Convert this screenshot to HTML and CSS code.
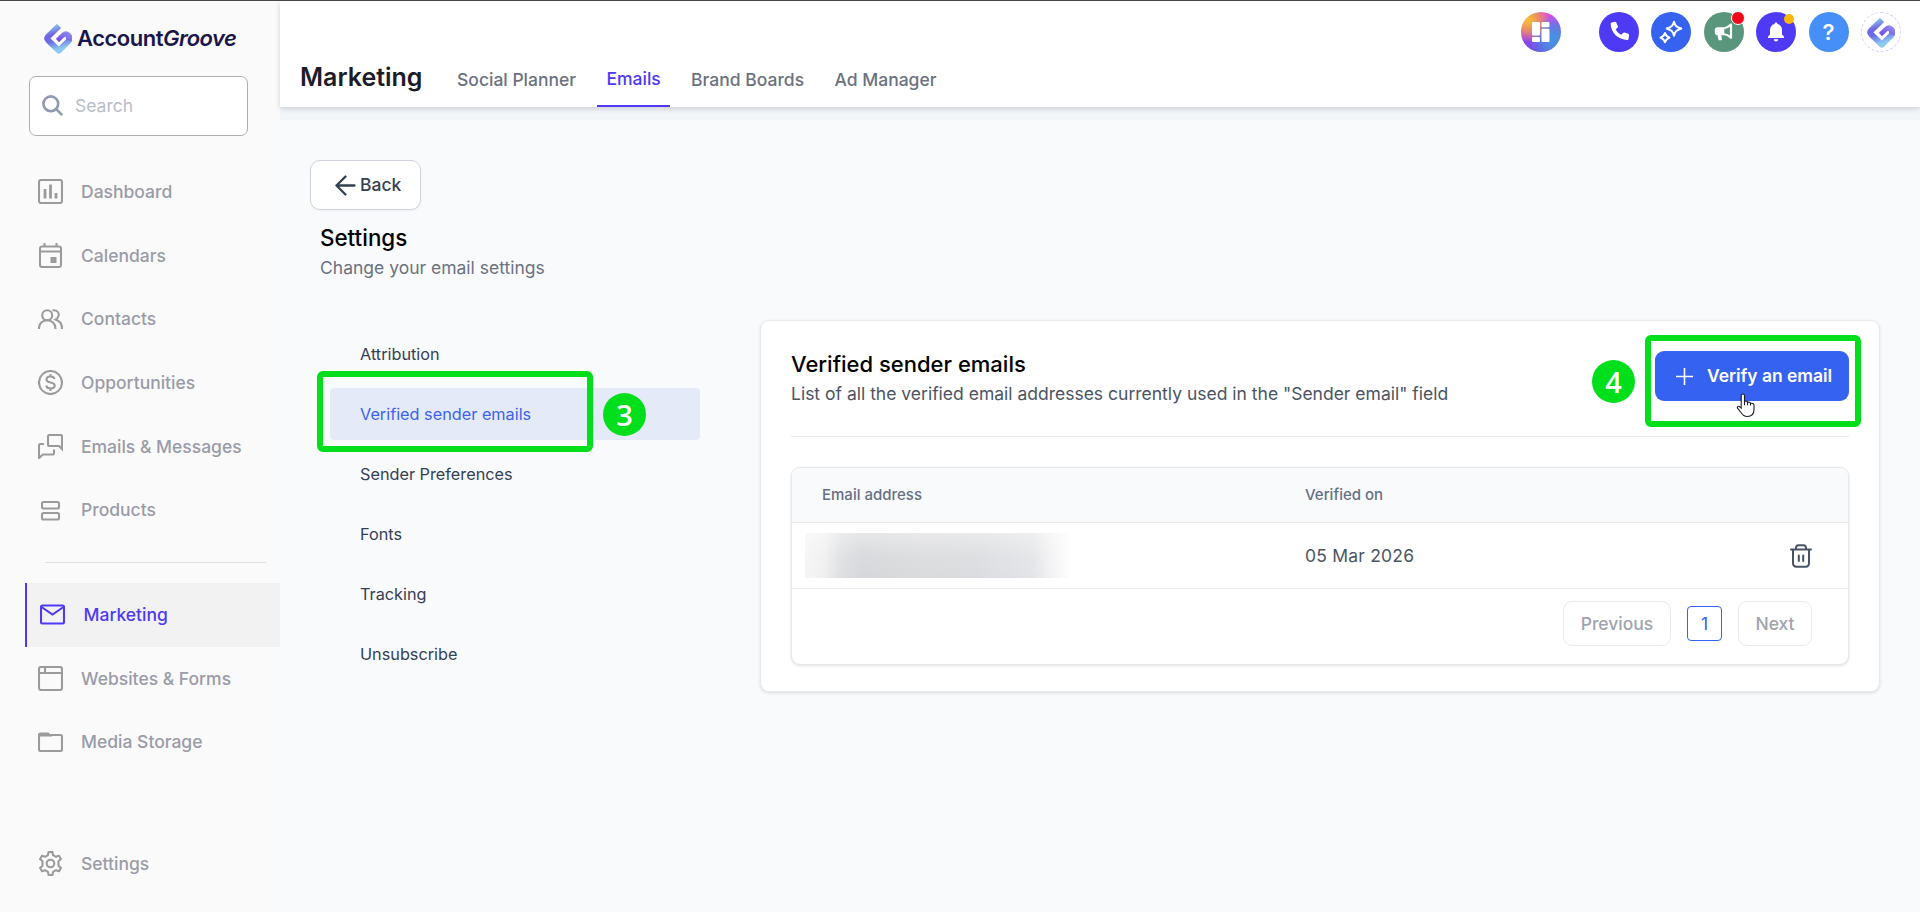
FILE: index.html
```html
<!DOCTYPE html>
<html lang="en">
<head>
<meta charset="utf-8">
<title>AccountGroove</title>
<link rel="stylesheet" href="styles.css">
</head>
<body>
<svg class="defs" width="0" height="0" aria-hidden="true">
  <defs>
    <linearGradient id="lg" x1="0" y1="0" x2="0.25" y2="1">
      <stop offset="0" stop-color="#8fd0ee"/><stop offset=".4" stop-color="#6f63e6"/><stop offset=".65" stop-color="#6c6ee4"/><stop offset="1" stop-color="#8cc8f0"/>
    </linearGradient>
    <linearGradient id="lg2" x1="0" y1="1" x2="1" y2="0">
      <stop offset="0" stop-color="#6f45e2"/><stop offset="1" stop-color="#8b86f0"/>
    </linearGradient>
    <symbol id="logo" viewBox="0 0 28 31">
      <path d="M15 2.800 4.200 13.300q-1.900 2 0 4L14.800 27.600 24.200 18.300q2-2.800-.2-5.600" fill="none" stroke="url(#lg)" stroke-width="6" stroke-linejoin="round"/>
      <path d="M25 17.500q1.600-3.200-.9-5.600-2.300-1.900-4.600.2L12.800 18.700" fill="none" stroke="url(#lg2)" stroke-width="5.200" stroke-linejoin="round"/>
      <path d="M15.500 9.500 9.800 15.200 15 20.800 21.500 14.600" fill="none" stroke="#fff" stroke-width="2.300"/>
    </symbol>
  </defs>
</svg>
<div class="app">
  <aside class="sidebar">
    <div class="brand"><svg width="28" height="31"><use href="#logo"/></svg><span class="brand-name">Account<i>Groove</i></span></div>
    <div class="search"><svg width="22" height="22" viewBox="0 0 22 22" fill="none" stroke="#8f9bb3" stroke-width="2.600"><circle cx="8.800" cy="8.800" r="7.400"/><path d="m14.200 14.200 6 6"/></svg><span>Search</span></div>
    <nav class="nav">
      <a class="item"><svg class="ico" viewBox="0 0 25 25"><rect x="1" y="1" width="23" height="23" rx="2"/><path d="M7 10v9.500M12.500 5.500v14M18 14v5.500" stroke-width="2.800"/></svg><span>Dashboard</span></a>
      <a class="item"><svg class="ico" viewBox="0 0 25 25"><rect x="2" y="3.500" width="21" height="20.500" rx="2"/><path d="M2 8.500h21M6.500 0v4M18.500 0v4"/><rect x="12.500" y="14" width="6" height="6" fill="#9b9b9b" stroke="none"/></svg><span>Calendars</span></a>
      <a class="item"><svg class="ico" viewBox="0 0 25 25"><circle cx="9.200" cy="8.300" r="5"/><path d="M1 22v-1c0-4.300 3.500-7.700 8.200-7.700s8.200 3.400 8.200 7.700v1M14.500 3.400c4.500-.8 7 2.200 6 5.600-.4 1.500-1.600 2.800-3 3.600 3.900 1.400 6.500 4.200 6.500 8.400v1"/></svg><span>Contacts</span></a>
      <a class="item"><svg class="ico" viewBox="0 0 25 25"><circle cx="12.500" cy="12.500" r="11.500"/><path d="M12.500 4v2.500M12.500 18.500V21M16.500 9c-.5-1.700-2-2.500-4-2.500-2.300 0-4 1.100-4 3 0 4.300 8.200 1.700 8.200 6 0 1.900-1.800 3-4.200 3-2.200 0-3.900-1-4.300-3"/></svg><span>Opportunities</span></a>
      <a class="item"><svg class="ico" viewBox="0 0 25 25"><path d="M10 2.500Q10 1 11.500 1h11Q24 1 24 2.500V15l-3-3h-9.500Q10 12 10 10.500zM6 10H2.500Q1 10 1 11.500V24l4-3.500h9.500q1.500 0 1.500-1.500v-3.500"/></svg><span>Emails &amp; Messages</span></a>
      <a class="item"><svg class="ico" viewBox="0 0 25 25"><rect x="4" y="4" width="17" height="6.500" rx="1.500"/><rect x="4" y="15" width="17" height="6.500" rx="1.500"/></svg><span>Products</span></a>
      <div class="rule"></div>
      <a class="item active"><svg class="ico" viewBox="0 0 25 25"><rect x="1" y="3.500" width="23" height="18" rx="1.500"/><path d="m1.500 5 11 7.500L23.500 5"/></svg><span>Marketing</span></a>
      <a class="item"><svg class="ico" viewBox="0 0 25 25"><rect x="1" y="1" width="23" height="23" rx="2"/><path d="M1 7h23M7 1v6"/></svg><span>Websites &amp; Forms</span></a>
      <a class="item"><svg class="ico" viewBox="0 0 25 25"><rect x="1" y="5" width="23" height="16" rx="1.500"/><path d="M1 5Q1 3.500 2.500 3.500H10L12 5.500H1z" fill="#9b9b9b"/></svg><span>Media Storage</span></a>
      <a class="item last"><svg class="ico" viewBox="0 0 25 25"><circle cx="12.500" cy="12.500" r="3.800"/><path d="M10.600 1h3.800l.7 3.200 2.700 1.600 3.200-1 1.900 3.300-2.400 2.200v4.400l2.400 2.200-1.900 3.300-3.200-1-2.700 1.600-.7 3.200h-3.800l-.7-3.200-2.700-1.600-3.200 1-1.900-3.300 2.400-2.200v-4.400L2.100 8.100 4 4.800l3.200 1 2.700-1.600z" stroke-linejoin="round"/></svg><span>Settings</span></a>
    </nav>
  </aside>
  <main class="main">
    <header class="header">
      <div class="tools">
        <span class="dot grad"><svg width="18" height="20" viewBox="0 0 18 20" fill="#fff"><rect width="8" height="13.500" rx="1"/><rect y="15" width="8" height="5" rx="1"/><rect x="9.500" width="8" height="5.200" rx="1"/><rect x="9.500" y="6.700" width="8" height="13.300" rx="1"/></svg></span>
        <span class="dot purple"><svg width="26" height="26" viewBox="0 0 20 20" fill="#fff"><path d="M4.400 2.700 6.800 2.200c.5-.1 1 .2 1.200.7l1.100 2.600c.2.400.1.900-.3 1.200L7.500 7.900c.8 1.800 2.300 3.400 4.300 4.300l1.300-1.500c.3-.4.800-.5 1.200-.3l2.800 1c.5.200.8.700.7 1.200l-.5 2.700c-.1.500-.5.800-1 .8C9.500 16.100 3.600 10.500 3.600 3.700c0-.5.300-.9.800-1z"/></svg></span>
        <span class="dot blue"><svg width="24" height="24" viewBox="0 0 24 24" fill="none" stroke="#fff" stroke-width="2" stroke-linejoin="round"><path d="M15 1.800c1 3.800 2.200 5 7.300 6.700-5 1.700-6.300 2.900-7.300 7.300-1-4.400-2.300-5.600-7.300-7.300 5-1.700 6.300-2.900 7.300-6.700zM6 13c.6 2.500 1.400 3.400 4.500 4.600C7.400 18.800 6.600 19.600 6 22.300c-.6-2.700-1.400-3.500-4.500-4.700C4.600 16.400 5.400 15.500 6 13z"/></svg></span>
        <span class="dot green"><svg width="20" height="20" viewBox="0 0 20 20" fill="none" stroke="#fff" stroke-width="2.200" stroke-linejoin="round"><path d="M9.500 6.500c3-.3 5-1.500 7.500-4v13.300c-2.500-2.500-4.500-3.500-7.500-3.800"/><path d="M3.500 6h6v6.500h-6c-1.500 0-2-1-2-2.200V8.200C1.500 7 2 6 3.500 6zM4 12l1.200 5.500h2L6.500 12z" fill="#fff" stroke-width="1.500"/></svg><b class="badge red"></b></span>
        <span class="dot purple"><svg width="18" height="20" viewBox="0 0 18 20" fill="#fff"><path d="M9 .5c-.9 0-1.500.6-1.500 1.500C4.500 2.700 3 5 3 8v4.500L1 14.500V16h16v-1.500l-2-2V8c0-3-1.500-5.300-4.500-6C10.500 1.100 9.900.5 9 .5zM6.700 17.300c.2 1.400 1.200 2.200 2.300 2.200s2.100-.8 2.300-2.200z"/></svg><b class="badge yellow"></b></span>
        <span class="dot sky">?</span>
        <span class="dot avatar"><svg width="28" height="31"><use href="#logo"/></svg></span>
      </div>
      <div class="tabs"><h1>Marketing</h1><a class="t1">Social Planner</a><a class="on">Emails</a><a>Brand Boards</a><a>Ad Manager</a></div>
    </header>
    <div class="strip"></div>
    <section class="content">
      <button class="back"><svg width="21" height="21" viewBox="0 0 21 21" fill="none" stroke="#344054" stroke-width="2.300" stroke-linecap="round" stroke-linejoin="round"><path d="M19.500 10.500h-18M10.500 1.500l-9 9 9 9"/></svg><span>Back</span></button>
      <h2 class="page-title">Settings</h2>
      <p class="page-sub">Change your email settings</p>
      <div class="cols">
        <ul class="menu">
          <li>Attribution</li>
          <li class="sel">Verified sender emails<span class="frame frame-3"></span><span class="num num-3">3</span></li>
          <li>Sender Preferences</li><li>Fonts</li><li>Tracking</li><li>Unsubscribe</li>
        </ul>
        <div class="card">
          <div class="card-head">
            <div><h2 class="card-title">Verified sender emails</h2><p class="card-sub">List of all the verified email addresses currently used in the "Sender email" field</p></div>
            <div class="action">
              <button class="primary"><svg width="17" height="17" viewBox="0 0 17 17" stroke="#fff" stroke-width="1.600"><path d="M8.500 0v17M0 8.500h17"/></svg><span>Verify an email</span></button>
              <span class="frame frame-4"></span><span class="num num-4">4</span>
              <svg class="cursor" width="20" height="25" viewBox="0 0 20 25"><path d="M6.800 1c1.100 0 1.700.8 1.700 1.800v5.400c2.200-.3 3 .3 3 1.100 1.700-.4 2.800.1 3 1 1.900-.3 3.500.3 3.500 2v4.200c0 4.300-2.300 7-6.700 7-3.300 0-4.700-1.300-6.300-4L1.500 15.200c-.7-1.400.9-2.600 2.300-1.400l1.400 1.300V2.800c0-1 .5-1.800 1.600-1.800z" fill="#fff" stroke="#1b1b2e" stroke-width="1.100"/><path d="M8.500 8v4.200M11.500 9v3.200M14.500 10v2.500" stroke="#1b1b2e" stroke-width="1.100"/></svg>
            </div>
          </div>
          <div class="table">
            <div class="row th"><span>Email address</span><span>Verified on</span></div>
            <div class="row td"><span class="hidden-mail"></span><span>05 Mar 2026</span><svg class="trash" width="22" height="24" viewBox="0 0 22 24" fill="none" stroke="#475467" stroke-width="2" stroke-linecap="round" stroke-linejoin="round"><path d="M1 5.500h20M6 5.500V4c0-2 .8-2.800 2.500-2.800h5C15.200 1.200 16 2 16 4v1.500M3 5.500V19c0 2.500 1 3.700 3.500 3.700h9c2.500 0 3.500-1.200 3.500-3.700V5.500M8.800 11.500V17M13.200 11.500V17"/></svg></div>
            <div class="pager"><span class="pg">Previous</span><span class="cur">1</span><span class="pg next">Next</span></div>
          </div>
        </div>
      </div>
    </section>
  </main>
</div>
</body>
</html>
```
FILE: styles.css
```css
* { box-sizing: border-box; }
body { margin: 0; font-family: Inter, "Liberation Sans", sans-serif; font-size: 17.5px; background: #f9fafc; }
h1, h2, p, ul { margin: 0; padding: 0; }
button { font: inherit; }
.defs { position: absolute; }
.app { display: grid; grid-template-columns: 280px 1fr; height: 912px; border-top: 1px solid #474747; overflow: hidden; }

.sidebar { background: #fafafa; }
.brand { display: flex; align-items: center; gap: 5px; height: 75px; padding: 0 0 0 44px; }
.brand-name { padding-bottom: 1px; color: #1b1649; font-size: 22px; font-weight: 600; letter-spacing: -0.5px; line-height: 30px; }
.search { display: flex; align-items: center; gap: 11px; width: 219px; height: 60px; margin-left: 29px; padding-left: 12px; border: 1px solid #afafaf; border-radius: 7px; background: #fff; color: #b9bec7; }
.search span { padding-bottom: 2px; }
.nav { padding-top: 24px; }
.item { display: flex; align-items: center; gap: 18px; height: 63.7px; margin-left: 25px; padding-left: 13px; color: #9a9ca8; font-size: 17.5px; font-weight: 500; }
.item span { padding-bottom: 1px; }
.ico { width: 25px; height: 25px; flex: none; fill: none; stroke: #9b9b9b; stroke-width: 2.1; }
.rule { height: 1px; margin: 20px 14px 20px 45px; background: #dfdfdf; }
.active { gap: 18.5px; border-left: 2px solid #4e3af5; background: #f2f2f2; color: #4e3af5; }
.active .ico { stroke: #4e3af5; }
.last { margin-top: 57.5px; }

.main { min-width: 0; }
.header { position: relative; display: flex; flex-direction: column; height: 106px; background: #fff; box-shadow: 0 2px 5px rgba(60, 75, 90, .22); }
.tools { display: flex; justify-content: flex-end; gap: 12.5px; padding: 11px 19px 0 0; }
.dot { position: relative; display: flex; align-items: center; justify-content: center; width: 40px; height: 40px; border-radius: 50%; }
.grad { margin-right: 25.5px; background: radial-gradient(circle at 18% 20%, #f5b83b 5%, rgba(240, 150, 80, .8) 25%, transparent 48%), radial-gradient(circle at 80% 68%, #4a90e2 10%, rgba(80, 125, 228, .8) 34%, transparent 60%), linear-gradient(200deg, #e04bf0 35%, #a63cf5 65%, #5a50dd); }
.purple { background: #4e3af5; }
.blue { background: #3563f0; }
.green { background: #59967c; }
.sky { background: #468ff8; color: #fff; font-size: 22px; font-weight: 600; }
.avatar { border: 1px dashed #d8d2f8; }
.badge { position: absolute; border-radius: 50%; }
.red { right: -1px; top: -1px; width: 14px; height: 14px; background: #f20a1a; border: 1px solid #fff; }
.yellow { right: 2px; top: 2px; width: 10px; height: 10px; background: #f8b803; }
.tabs { display: flex; align-items: stretch; height: 55px; padding-left: 20px; color: #6b7280; font-weight: 500; }
.tabs h1 { width: 157px; color: #1c1c28; font-size: 25px; font-weight: 600; line-height: 51px; }
.tabs a { line-height: 55px; padding: 0 9.6px; margin-right: 11.2px; border-bottom: 2px solid transparent; height: 55px; white-space: nowrap; }
.tabs .t1 { padding-left: 0; }
.tabs .on { line-height: 53px; border-color: #4e3af5; color: #4e3af5; }

.strip { height: 13px; background: #f3f6f9; }
.content { padding: 40px 40px 0 30px; }
.back { display: flex; align-items: center; gap: 4px; width: 111px; height: 50px; padding: 0 0 0 24px; border: 1px solid #d0d5dd; border-radius: 10px; background: #fff; box-shadow: 0 1px 2px rgba(16, 24, 40, .05); color: #344054; font-weight: 500; }
.back span, .primary span { padding-bottom: 2px; }
.page-title { margin: 10px 0 0 10px; font-size: 22.4px; font-weight: 500; line-height: 35px; }
.page-sub { margin-left: 10px; color: #6b7280; line-height: 25px; }
.cols { display: grid; grid-template-columns: 370px 1120px; justify-content: space-between; align-items: start; padding: 40px 0 0 20px; }
.menu { list-style: none; display: flex; flex-direction: column; gap: 8px; padding-top: 8px; }
.menu li { position: relative; height: 52px; padding-left: 30px; border-radius: 4px; color: #344054; font-size: 16.25px; line-height: 52px; }
.menu .sel { background: #e5eaf8; color: #3d62ee; }
.card { height: 372px; padding: 30px; border: 1px solid #e8eaee; border-radius: 9px; background: #fff; box-shadow: 0 1px 3px rgba(16, 24, 40, .14); }
.card-head { display: flex; justify-content: space-between; height: 86px; border-bottom: 1px solid #e6e8eb; }
.card-title { margin-top: -1px; font-size: 22px; font-weight: 500; line-height: 28px; }
.card-sub { color: #4b5563; line-height: 32px; }
.action { position: relative; width: 194px; height: 50px; }
.primary { display: flex; align-items: center; gap: 14px; width: 194px; height: 50px; padding: 0 0 0 21px; border: 0; border-radius: 9px; background: #3662f1; color: #fff; font-weight: 600; letter-spacing: -0.05px; white-space: nowrap; }

.table { height: 198px; margin-top: 30px; border: 1px solid #e5e7eb; border-radius: 9px; background: #fff; box-shadow: 0 1px 3px rgba(16, 24, 40, .13); overflow: hidden; }
.row { display: grid; grid-template-columns: 483px 1fr 52px; align-items: center; border-bottom: 1px solid #e8eaee; padding-left: 30px; }
.th { height: 55px; padding-bottom: 1px; background: #f9fafc; color: #667085; font-size: 15px; font-weight: 500; }
.td { height: 66px; color: #4b5563; letter-spacing: 0.2px; }
.trash { margin-left: -6px; }
.hidden-mail { width: 264px; height: 45px; margin-left: -17px; background: linear-gradient(180deg, rgba(255, 255, 255, .4), rgba(255, 255, 255, .1) 50%, transparent), linear-gradient(90deg, #f5f5f5 0, #f0f0f0 7%, #dedfe1 14%, #d6d7da 21%, #dadbdd 45%, #dbdcdf 65%, #e3e4e7 86%, #f4f4f5 94%, #fdfdfd 100%); }
.pager { display: flex; align-items: center; justify-content: flex-end; gap: 16px; padding: 12px 36px 0 0; }
.pg, .cur { display: flex; align-items: center; justify-content: center; border: 1px solid #e9eaed; }
.pg { width: 108px; height: 45px; border-radius: 9px; color: #a0a4ae; font-weight: 500; }
.next { width: 74px; }
.cur { width: 35px; height: 35px; border-color: #3662f1; border-radius: 4px; color: #3662f1; }

.frame { position: absolute; border: 6px solid #00de1c; border-radius: 6px; }
.frame-3 { left: -13px; top: -17px; width: 276px; height: 81px; }
.frame-4 { left: -10px; top: -16px; width: 216px; height: 92px; }
.num { position: absolute; display: flex; align-items: center; justify-content: center; width: 43px; height: 43px; border-radius: 50%; background: #00de1c; color: #fff; font: 600 29px "Open Sans", sans-serif; }
.num-3 { left: 273px; top: 5px; }
.num-4 { left: -63px; top: 9px; }
.cursor { position: absolute; left: 81px; top: 42px; }
```
